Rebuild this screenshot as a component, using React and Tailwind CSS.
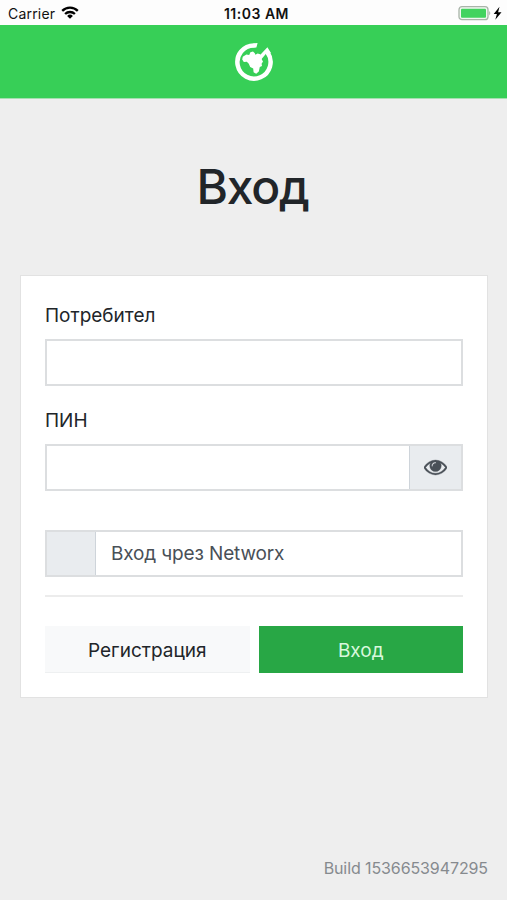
import { useState } from "react";

function StatusBar() {
  return (
    <div className="h-[25px] grid grid-cols-3 items-center bg-[#fdfdfd] text-[#111] pl-2 pr-1">
      <div className="flex items-center gap-[6px]">
        <span className="text-[14px] leading-none tracking-[0.2px] pt-[2px]">Carrier</span>
        <svg className="w-[18px] h-[13px]" viewBox="0 0 18 13" fill="none" stroke="black" strokeWidth="2.3">
          <path d="M1.2 4.9a11 11 0 0 1 15.6 0" />
          <path d="M4.1 8a7 7 0 0 1 9.8 0" />
          <path d="M9 12.7 6.1 9.9a4.1 4.1 0 0 1 5.8 0z" fill="black" stroke="none" />
        </svg>
      </div>

      <span className="text-[14px] leading-none font-semibold tracking-[0.5px] text-center pl-[2px] pt-[2px] whitespace-nowrap">
        11:03 AM
      </span>

      <svg className="w-[45px] h-[16px] justify-self-end" viewBox="0 0 45 16">
        <rect x="1" y="1.7" width="29" height="13" rx="3" fill="#f1f8f1" stroke="#a9b4a9" strokeWidth="1.3" />
        <rect x="3" y="3.7" width="25" height="9" rx="1" fill="#42d35f" />
        <path d="M31.2 6q2.2 2.1 0 4.4z" fill="#a9b4a9" />
        <path d="M41.5 1.8 35.7 9h3.2l-1.6 5.8 6.2-7.6h-3.4z" fill="black" />
      </svg>
    </div>
  );
}

function Logo() {
  return (
    <svg className="w-10 h-10" viewBox="0 0 40 40" fill="white">
      <path
        d="M20 3.4A16.6 16.6 0 1 0 33.6 10.5"
        fill="none"
        stroke="white"
        strokeWidth="4.5"
      />
      <path d="M19.6 1.2l4-.2-1.2 4.6-2.8.2z" />
      <path d="M33.4 5.2 37 11l-4 2.4-1-1.6-4 4.6-2.6-2.6z" />
      <path d="M8.8 14.8l3.6-2.4 2.8.6 1.2-2.8 2.6-.6 1.8 1.6.6 1.6 2.2-1.4 2.6.8 2 2.6-.4 2.6 1.2 2.2-1.4 2.2.4 2.2-2.2 1-1 4.4-2.6 2.4-2.6-1.6-.4-3.6-3-1.6-1.4-3.2-2-2-3 .2-1.6-2.4z" />
    </svg>
  );
}

function EyeIcon() {
  return (
    <svg className="w-[23px] h-[23px]" viewBox="0 64 1792 1792" fill="currentColor" stroke="currentColor" strokeWidth="30">
      <path d="M1664 960q-152-236-381-353 61 104 61 225 0 185-131.5 316.5t-316.5 131.5-316.5-131.5-131.5-316.5q0-121 61-225-229 117-381 353 133 205 333.5 326.5t434.5 121.5 434.5-121.5 333.5-326.5zm-720-384q0-20-14-34t-34-14q-125 0-214.5 89.5t-89.5 214.5q0 20 14 34t34 14 34-14 14-34q0-86 61-147t147-61q20 0 34-14t14-34zm848 384q0 34-20 69-140 230-376.5 368.5t-499.5 138.5-499.5-139-376.5-368q-20-35-20-69t20-69q140-229 376.5-368t499.5-139 499.5 139 376.5 368q20 35 20 69z" />
    </svg>
  );
}

export default function App() {
  const [showPin, setShowPin] = useState(false);

  return (
    <div className="w-full h-[900px] flex flex-col overflow-hidden bg-[#eee] text-[#212529] font-['Inter','Liberation_Sans',sans-serif]">
      <StatusBar />

      <header className="h-[74px] flex items-center justify-center bg-[#37cf57] border-b border-[#a5e0b0]">
        <Logo />
      </header>

      <main className="flex-1 flex flex-col pl-5 pr-[19px]">
        <h1 className="mt-[58px] h-[60px] leading-[60px] pr-[3px] text-[48px] tracking-[-1.3px] font-medium text-center">
          Вход
        </h1>

        <form
          className="mt-[58px] h-[423px] px-[24px] pt-[25px] flex flex-col bg-white border border-[#e2e2e2]"
          onSubmit={(e) => e.preventDefault()}
        >
          <label htmlFor="user" className="h-[30px] leading-[30px] text-[19px]">Потребител</label>
          <input
            id="user"
            className="mt-[8px] h-[47px] shrink-0 px-4 border-2 border-[#dcdee0] outline-none"
          />

          <label htmlFor="pin" className="mt-[20px] h-[30px] leading-[30px] text-[19px]">ПИН</label>
          <div className="mt-[8px] h-[47px] flex border-2 border-[#dcdee0]">
            <input
              id="pin"
              type={showPin ? "text" : "password"}
              className="flex-1 min-w-0 px-4 outline-none"
            />
            <button
              type="button"
              onClick={() => setShowPin(!showPin)}
              className="w-[52px] flex items-center justify-center bg-[#e9ecef] border-l border-[#ced4da] text-[#495057]"
            >
              <EyeIcon />
            </button>
          </div>

          <div className="mt-[39px] h-[47px] flex border-2 border-[#dcdee0]">
            <div className="w-[49px] bg-[#e9ecef] border-r border-[#ced4da]" />
            <div className="px-[15px] leading-[44px] text-[19px] tracking-[-0.15px] text-[#495057]">Вход чрез Networx</div>
          </div>

          <hr className="mt-[18px] border-t-2 border-[#ececec]" />

          <div className="mt-[29px] h-[47px] grid grid-cols-2 gap-[9px]">
            <button type="button" className="pt-[4px] text-[19px] bg-[#f8f9fa] border-b border-[#eef0f1]">
              Регистрация
            </button>
            <button type="submit" className="pt-[3px] text-[19px] bg-[#28a745] text-[#d8f8dc]">
              Вход
            </button>
          </div>
        </form>

        <footer className="mt-auto mb-[20px] h-6 leading-6 text-right text-[16px] tracking-[-0.1px] text-[#868a8e]">
          Build 1536653947295
        </footer>
      </main>
    </div>
  );
}
